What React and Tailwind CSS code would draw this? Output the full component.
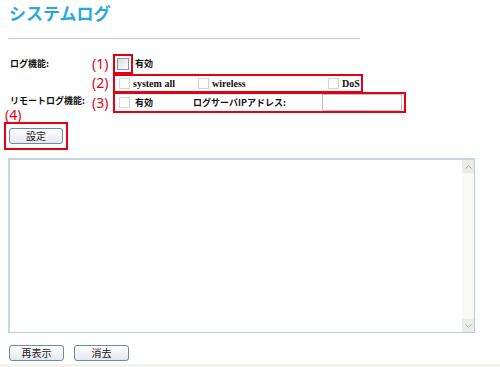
const jp = { fontFamily: '"Noto Sans CJK JP", "Liberation Sans", sans-serif' };
const serif = { fontFamily: '"Liberation Serif", "Noto Sans CJK JP", serif' };
const note = { fontFamily: '"Noto Sans", "Liberation Sans", sans-serif' };

function Box({ strong }) {
    return strong ? (
        <span className="inline-block w-[12px] h-[12px] border border-[#7f9db9] bg-gradient-to-br from-[#dcdcd6] to-white" />
    ) : (
        <span className="inline-block w-[11px] h-[11px] border border-[#d6d6ce] bg-white" />
    );
}

function Btn({ children, w = 'w-[55px]' }) {
    return (
        <button
            className={`${w} h-[16px] rounded-[3px] border border-[#6e8aa6] bg-gradient-to-b from-white to-[#e4e8ee] text-[10px] leading-none text-[#222] flex items-center justify-center`}
            style={jp}
        >
            {children}
        </button>
    );
}

export default function App() {
    return (
        <div className="w-[500px] h-[367px] bg-white overflow-hidden flex flex-col text-[#111]">
            <div className="pl-[8px] pr-[25px] flex-1 flex flex-col">
                <h1 className="h-[23px] pl-[1px] text-[17px] font-bold leading-[25px] text-[#29a8e0]" style={jp}>
                    システムログ
                </h1>
                <div className="mt-[15px] w-[352px] h-px bg-[#c6c6ba]" />

                {/* row 1 */}
                <div className="mt-[15px] flex items-center h-[20px]">
                    <div className="w-[84px] pl-[2px] text-[9px] font-bold" style={jp}>ログ機能:</div>
                    <div className="w-[21px] text-[14px] leading-none text-[#e60012]" style={note}>(1)</div>
                    <div className="w-[20px] h-[20px] border-2 border-[#e60012] flex items-center justify-center">
                        <Box strong />
                    </div>
                    <span className="ml-[2px] text-[9px] font-bold" style={jp}>有効</span>
                </div>

                {/* row 2 */}
                <div className="flex items-center h-[18px]">
                    <div className="w-[84px]" />
                    <div className="w-[21px] text-[14px] leading-none text-[#e60012]" style={note}>(2)</div>
                    <div className="w-[250px] h-[19px] border-2 border-[#e60012] flex items-center pl-[4px] text-[10px] font-bold" style={serif}>
                        <Box />
                        <span className="ml-[3px] w-[65px]">system all</span>
                        <Box />
                        <span className="ml-[3px] w-[116px]">wireless</span>
                        <Box />
                        <span className="ml-[3px]">DoS</span>
                    </div>
                </div>

                {/* row 3 */}
                <div className="flex items-center h-[21px]">
                    <div className="w-[84px] pl-[2px] text-[9px] font-bold leading-[12px] -mt-[3px]" style={jp}>リモートログ機能:</div>
                    <div className="w-[21px] text-[14px] leading-none text-[#e60012]" style={note}>(3)</div>
                    <div className="w-[293px] h-[21px] border-2 border-[#e60012] flex items-center pl-[4px] text-[9px] font-bold" style={jp}>
                        <Box />
                        <span className="ml-[5px] w-[58px]">有効</span>
                        <span className="w-[129px]">ログサーバIPアドレス:</span>
                        <span className="w-[80px] h-[17px] border border-[#b4c4d4] bg-white" />
                    </div>
                </div>

                {/* (4) */}
                <div className="-mt-[5px] -ml-[3px] text-[14px] leading-[14px] text-[#e60012]" style={note}>(4)</div>
                <div className="-ml-[4px] w-[64px] h-[28px] border-2 border-[#e60012] flex items-center justify-center">
                    <Btn w="w-[54px]">設定</Btn>
                </div>

                {/* log area */}
                <div className="mt-[8px] w-[467px] h-[175px] border border-[#b8cadc] border-t-2 border-l-2 border-t-[#c8d6e4] border-l-[#c8d6e4] flex justify-end">
                    <div className="w-[12px] h-full bg-[#fafaf4] flex flex-col justify-between">
                        <div className="h-[13px] bg-[#ecece6] flex items-center justify-center">
                            <svg width="7" height="4" viewBox="0 0 7 4"><path d="M0.5 3.5 L3.5 0.8 L6.5 3.5" stroke="#b0b0a8" fill="none" /></svg>
                        </div>
                        <div className="h-[13px] bg-[#ecece6] flex items-center justify-center">
                            <svg width="7" height="4" viewBox="0 0 7 4"><path d="M0.5 0.5 L3.5 3.2 L6.5 0.5" stroke="#b0b0a8" fill="none" /></svg>
                        </div>
                    </div>
                </div>

                <div className="mt-[12px] flex gap-[10px] pl-[1px]">
                    <Btn>再表示</Btn>
                    <Btn>消去</Btn>
                </div>
            </div>
            <div className="h-[3px] bg-[#f4f4ee]" />
        </div>
    );
}
